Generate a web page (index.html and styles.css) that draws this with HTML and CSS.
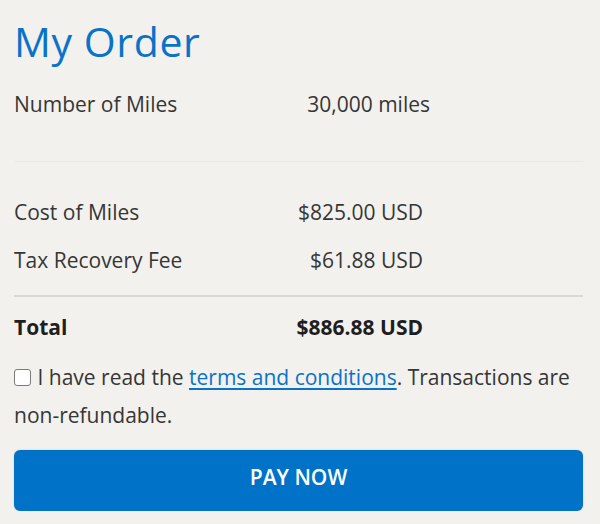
FILE: index.html
```html
<!DOCTYPE html>
<html lang="en">
<head>
<meta charset="utf-8">
<title>My Order</title>
<link rel="stylesheet" href="styles.css">
</head>
<body>
<main class="order">
  <h1 class="order-title">My Order</h1>
  <div class="rows rows-miles">
    <div class="row"><span class="label">Number of Miles</span><span class="value">30,000 miles</span></div>
  </div>
  <hr class="sep sep-light">
  <div class="rows rows-cost">
    <div class="row"><span class="label">Cost of Miles</span><span class="value">$825.00 USD</span></div>
    <div class="row"><span class="label">Tax Recovery Fee</span><span class="value">$61.88 USD</span></div>
  </div>
  <hr class="sep sep-strong">
  <div class="rows rows-cost">
    <div class="row row-total"><span class="label">Total</span><span class="value">$886.88 USD</span></div>
  </div>
  <p class="terms"><input type="checkbox" class="check" aria-label="Agree"> I have read the <a href="#" class="link">terms and conditions</a>. Transactions are non-refundable.</p>
  <button class="pay" type="button">PAY NOW</button>
</main>
</body>
</html>
```
FILE: styles.css
```css
html, body {
  margin: 0;
  padding: 0;
  background: #f2f1ee;
}
body {
  font-family: "Open Sans", "Noto Sans", sans-serif;
  color: #363636;
}
.order {
  padding: 17px 17px 0 14px;
}
.order-title {
  margin: 0;
  font-size: 41px;
  line-height: 48px;
  font-weight: 400;
  color: #0a73c7;
  letter-spacing: 0.6px;
}
.rows-miles {
  margin-top: 15px;
}
.row {
  display: grid;
  font-size: 21px;
  line-height: 48px;
}
.rows-miles .row {
  grid-template-columns: 270px 146px;
}
.rows-cost .row {
  grid-template-columns: 260px 149px;
}
.value {
  text-align: right;
}
.row-total {
  font-weight: 700;
  color: #1e1e1e;
}
.sep {
  border: 0;
  margin: 0;
}
.sep-light {
  height: 1px;
  background: #ebe9e6;
  margin-top: 33px;
  margin-bottom: 26px;
}
.sep-strong {
  height: 2px;
  background: #dcdad7;
  margin-top: 11px;
  margin-bottom: 6px;
}
.terms {
  margin: 7px 0 0;
  font-size: 21px;
  line-height: 38px;
}
.check {
  appearance: none;
  -webkit-appearance: none;
  width: 17px;
  height: 17px;
  margin: 0 1px 0 0;
  border: 1px solid #7a7a7a;
  border-radius: 3px;
  background: #fff;
  vertical-align: -1px;
}
.link {
  color: #0a73c7;
  text-decoration: underline;
  text-underline-offset: 3px;
}
.pay {
  display: block;
  width: 100%;
  height: 61px;
  margin-top: 16px;
  padding: 0 0 7px;
  border: 0;
  border-radius: 6px;
  background: #0073c8;
  color: #fff;
  font-family: "Open Sans", "Noto Sans", sans-serif;
  font-size: 21px;
  font-weight: 600;
  box-shadow: 0 0 2px rgba(0, 0, 0, 0.15);
}
```
